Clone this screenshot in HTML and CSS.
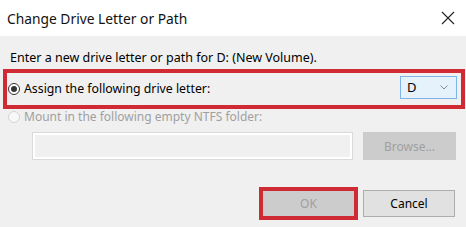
FILE: index.html
```html
<!DOCTYPE html>
<html>
<head>
<meta charset="utf-8">
<link rel="stylesheet" href="styles.css">
</head>
<body>
<div class="dialog">
  <div class="titlebar">
    <span class="title">Change Drive Letter or Path</span>
    <svg class="close" width="14" height="14" viewBox="0 0 14 14"><path d="M1 1 L13 13 M13 1 L1 13" stroke="#222" stroke-width="1.1" fill="none"/></svg>
  </div>
  <div class="body">
    <div class="prompt">Enter a new drive letter or path for D: (New Volume).</div>
    <div class="assign highlight">
      <span class="radio checked"></span>
      <span class="label big">Assign the following drive letter:</span>
      <div class="select">
        <span class="sel-value">D</span>
        <svg class="chev" width="8" height="5" viewBox="0 0 8 5"><path d="M0.5 0.5 L4 4 L7.5 0.5" stroke="#8a8a8a" stroke-width="1" fill="none"/></svg>
      </div>
    </div>
    <div class="mount">
      <span class="radio disabled"></span>
      <span class="label dim">Mount in the following empty NTFS folder:</span>
    </div>
    <div class="path-row">
      <div class="textbox"></div>
      <div class="btn disabled-btn browse">Browse...</div>
    </div>
    <div class="buttons">
      <div class="ok-wrap highlight"><div class="btn disabled-btn ok">OK</div></div>
      <div class="btn cancel">Cancel</div>
    </div>
  </div>
</div>
</body>
</html>
```
FILE: styles.css
```css
* { box-sizing: border-box; }
html, body { margin: 0; padding: 0; }
body {
  width: 466px;
  height: 227px;
  overflow: hidden;
  background: #f0f0f0;
  font-family: "Noto Sans", "Liberation Sans", sans-serif;
  font-size: 12px;
  color: #000;
}
.dialog { width: 466px; height: 227px; background: #f0f0f0; }
.titlebar {
  height: 36px;
  background: #fff;
  display: flex;
  align-items: center;
  justify-content: space-between;
  padding: 0 11px 0 7px;
}
.title { font-size: 13.8px; color: #111; }
.close { display: block; }
.body { display: flex; flex-direction: column; }
.prompt {
  margin-top: 14px;
  padding-left: 10px;
  line-height: 16px;
  height: 16px;
  font-size: 12.5px;
}
.highlight { border: 4px solid #d02a35; }
.assign {
  margin: 3px 0 0 3px;
  width: 462px;
  height: 40px;
  display: flex;
  align-items: center;
  padding-left: 1px;
  padding-right: 4px;
}
.radio {
  width: 12px;
  height: 12px;
  border-radius: 50%;
  border: 1px solid #333;
  background: #fff;
  display: inline-block;
  position: relative;
  flex: none;
}
.radio.checked::after {
  content: "";
  position: absolute;
  left: 2px; top: 2px;
  width: 6px; height: 6px;
  border-radius: 50%;
  background: #333;
}
.radio.disabled { border-color: #d4d4d4; background: #f8f8f8; }
.label { margin-left: 4px; line-height: 16px; }
.big { font-size: 12.3px; }
.dim { color: #a0a0a0; }
.select {
  margin-left: auto;
  width: 57px;
  height: 23px;
  margin-top: -4px;
  background: #e5f1fb;
  border: 1px solid #7eb4ea;
  display: flex;
  align-items: center;
  justify-content: space-between;
  padding: 0 8px 0 6px;
}
.sel-value { font-size: 13px; }
.chev { display: block; }
.mount {
  height: 16px;
  display: flex;
  align-items: center;
  padding-left: 8px;
}
.path-row {
  margin-top: 7px;
  height: 28px;
  display: flex;
  padding-left: 32px;
}
.textbox {
  width: 321px;
  height: 28px;
  border: 1px solid #dadada;
  box-shadow: inset 0 0 0 2px #fff;
  background: #f0f0f0;
}
.btn {
  display: flex;
  align-items: center;
  justify-content: center;
}
.disabled-btn { background: #cccccc; color: #a0a0a0; }
.browse { margin-left: 10px; width: 93px; height: 28px; }
.buttons {
  margin-top: 27px;
  display: flex;
  justify-content: flex-end;
  align-items: center;
  padding-right: 11px;
}
.ok-wrap { width: 99px; height: 33px; }
.ok { width: 100%; height: 100%; }
.cancel {
  margin-left: 5px;
  width: 92px;
  height: 27px;
  background: #e1e1e1;
  border: 1px solid #adadad;
  color: #000;
}
```
